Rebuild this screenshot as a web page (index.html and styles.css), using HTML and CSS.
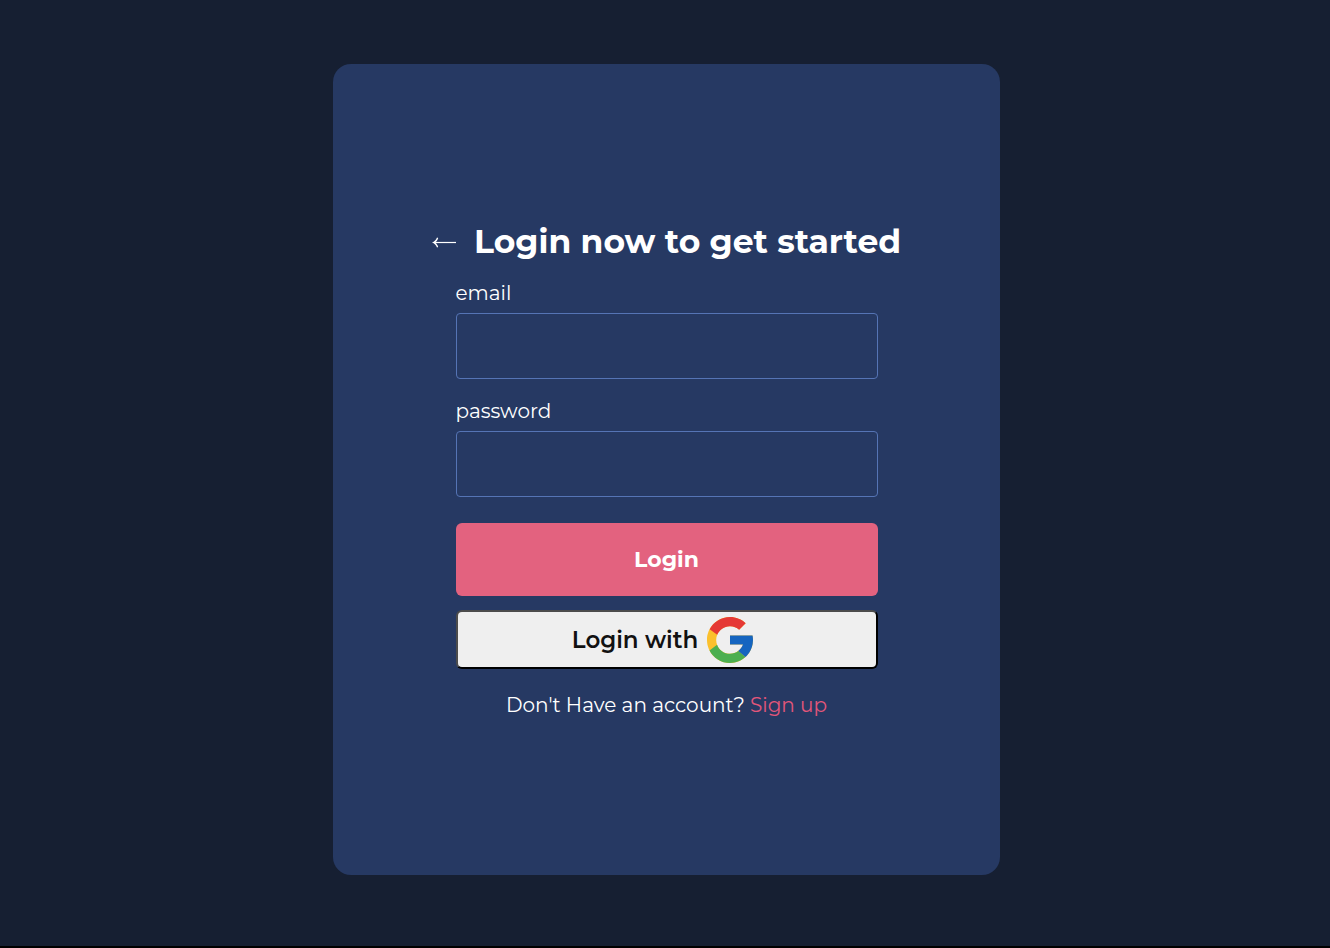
FILE: index.html
```html
<!DOCTYPE html>
<html lang="en">
<head>
<meta charset="utf-8">
<meta name="viewport" content="width=device-width, initial-scale=1">
<title>Login</title>
<link rel="stylesheet" href="styles.css">
</head>
<body>
<main class="card">
  <header class="heading">
    <a class="back" href="#" aria-label="Back">
      <svg width="24" height="14" viewBox="0 0 24 14" fill="none" stroke="currentColor"><path stroke-width="1.200" d="M24 8.500H2"/><path fill="currentColor" stroke="none" d="M0 8.500C2.500 7.500 4 6 5 3.500L6.200 4C5.600 6 4.500 7.500 3 8.500 4.500 9.500 5.600 11 6.200 13L5 13.500C4 11 2.500 9.500 0 8.500z"/></svg>
    </a>
    <h1 class="title">Login now to get started</h1>
  </header>
  <form class="form">
    <div class="field">
      <label class="label" for="email">email</label>
      <input class="input" id="email" type="email">
    </div>
    <div class="field">
      <label class="label" for="password">password</label>
      <input class="input" id="password" type="password">
    </div>
    <button class="login" type="submit">Login</button>
    <button class="google" type="button">
      <span>Login with</span>
      <svg class="google-logo" viewBox="4 4 40 40" aria-hidden="true">
        <path fill="#fbc02d" d="M43.611 20.083H42V20H24v8h11.303c-1.649 4.657-6.08 8-11.303 8-6.627 0-12-5.373-12-12s5.373-12 12-12c3.059 0 5.842 1.154 7.961 3.039l5.657-5.657C34.046 6.053 29.268 4 24 4 12.955 4 4 12.955 4 24s8.955 20 20 20 20-8.955 20-20c0-1.341-.138-2.650-.389-3.917z"/>
        <path fill="#e53935" d="M6.306 14.691l6.571 4.819C14.655 15.108 18.961 12 24 12c3.059 0 5.842 1.154 7.961 3.039l5.657-5.657C34.046 6.053 29.268 4 24 4 16.318 4 9.656 8.337 6.306 14.691z"/>
        <path fill="#4caf50" d="M24 44c5.166 0 9.860-1.977 13.409-5.192l-6.190-5.238C29.211 35.091 26.715 36 24 36c-5.202 0-9.619-3.317-11.283-7.946l-6.522 5.025C9.505 39.556 16.227 44 24 44z"/>
        <path fill="#1565c0" d="M43.611 20.083L43.595 20H24v8h11.303c-.792 2.237-2.231 4.166-4.087 5.571l6.193 5.237C36.971 39.205 44 34 44 24c0-1.341-.138-2.650-.389-3.917z"/>
      </svg>
    </button>
  </form>
  <p class="signup">Don't Have an account? <a class="signup-link" href="#">Sign up</a></p>
</main>
</body>
</html>
```

FILE: styles.css
```css
* {
  box-sizing: border-box;
}

body {
  margin: 0;
  min-height: 100vh;
  padding: 64px 0 71px 3px;
  display: flex;
  justify-content: center;
  border-bottom: 2px solid #000;
  background: #161f32;
  color: #fff;
  font-family: Montserrat, Inter, "Open Sans", sans-serif;
}

.card {
  width: 100%;
  max-width: 667px;
  padding: 24px 24px 26px;
  display: flex;
  flex-direction: column;
  align-items: center;
  justify-content: center;
  border-radius: 18px;
  background: #263963;
}

.heading {
  display: flex;
  align-items: center;
  gap: 18px;
}

.back {
  display: flex;
  color: #fff;
}

.title {
  margin: 0;
  font-size: 33px;
  line-height: 40px;
  font-weight: 700;
}

.form {
  width: 100%;
  max-width: 422px;
  margin-top: 20px;
  display: flex;
  flex-direction: column;
}

.field {
  display: flex;
  flex-direction: column;
  gap: 8px;
  margin-bottom: 20px;
}

.label {
  font-size: 20px;
  line-height: 24px;
}

.input {
  height: 66px;
  padding: 0 16px;
  border: 1px solid #5574b5;
  border-radius: 4px;
  background: transparent;
  color: #fff;
  font: inherit;
  font-size: 20px;
}

.login {
  height: 73px;
  margin-top: 6px;
  border: 0;
  border-radius: 6px;
  background: #e3627f;
  color: #fff;
  font: inherit;
  font-size: 22px;
  font-weight: 700;
}

.google {
  height: 59px;
  margin-top: 14px;
  padding: 1px 8px 0 0;
  display: flex;
  align-items: center;
  justify-content: center;
  gap: 9px;
  border: 2px solid #000;
  border-color: #4c4c4c #000 #000 #4c4c4c;
  border-radius: 6px;
  background: #efefef;
  color: #111;
  font: inherit;
  font-size: 23px;
  font-weight: 600;
}

.google-logo {
  width: 46px;
  height: 46px;
}

.signup {
  margin: 24px 0 0;
  font-size: 20px;
  line-height: 24px;
}

.signup-link {
  color: #e3567a;
  text-decoration: none;
}
```
